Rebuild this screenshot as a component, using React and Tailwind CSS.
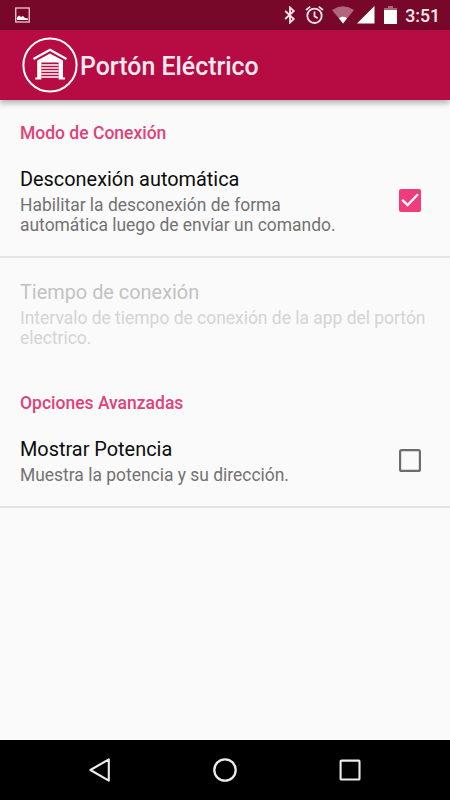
import React, { useState } from "react";

const StatusBar = () => (
  <div className="h-[30px] shrink-0 bg-[#78082a] flex items-center justify-between pl-[15px] pr-[10px]">
    <svg width="15" height="16" viewBox="0 0 15 16">
      <rect x="0.75" y="1" width="13.5" height="14" fill="none" stroke="#f3c9c9" strokeWidth="1.3" />
      <path d="M2 13V10.5l2-2 2 1.5L8 9l2 2 3 .5V13z" fill="#fff" />
    </svg>

    <div className="flex items-center">
      <svg width="12" height="18" viewBox="0 0 12 18" fill="none" stroke="#f6e6ea" strokeWidth="1.8">
        <path d="M1.2 5l8.6 8L6 16.6V1.4L9.8 5l-8.6 8" />
      </svg>
      <svg className="ml-[9px]" width="19" height="20" viewBox="0 0 19 20" fill="none" stroke="#f6e6ea" strokeWidth="1.8">
        <circle cx="9.5" cy="10.8" r="7.2" />
        <path d="M9.5 6.6v4.6l3.2 2M1 5l4.2-3.4M18 5l-4.2-3.4" />
      </svg>
      <svg className="ml-[8px]" width="22" height="18" viewBox="0 0 22 18">
        <path d="M11 17.5L0 4Q11-3.4 22 4z" fill="#b0667d" />
        <path d="M11 17.5L7 12.2Q11 9.4 15 12.2z" fill="#fff" />
      </svg>
      <svg className="ml-[3px]" width="18" height="18" viewBox="0 0 18 18">
        <path d="M0 17.5L17.5 0v17.5z" fill="#fff" />
      </svg>
      <svg className="ml-[9px]" width="13" height="18" viewBox="0 0 13 18">
        <path d="M4 0h5v2h4v2H0V2h4z" fill="#a9627a" />
        <path d="M0 4h13V18H0z" fill="#fff" />
      </svg>
      <span className="ml-[8px] pt-px text-[17.7px] leading-[30px] font-medium text-[#faecef]">3:51</span>
    </div>
  </div>
);

const GarageLogo = () => (
  <svg width="56" height="56" viewBox="0 0 56 56" fill="none" stroke="#fff">
    <circle cx="28" cy="28" r="26.6" strokeWidth="2" />
    <path d="M11.5 22L28 12.8 44.5 22" strokeWidth="2.4" />
    <path d="M28 16.4L15.2 23.4V40.5h-2v2h6.2V25.5h17.2V42.5H43v-2h-2V23.4z" fill="#fff" stroke="none" />
    <path d="M19.4 28h17.2M19.4 31h17.2M19.4 34h17.2M19.4 37h17.2M19.4 40h17.2" strokeWidth="1.5" />
  </svg>
);

const Toolbar = () => (
  <div className="h-[70px] shrink-0 bg-[#b60b43] flex items-center pl-[22px] shadow-[0_3px_6px_rgba(0,0,0,0.3)]">
    <GarageLogo />
    <h1 className="ml-[2px] mt-[4px] text-[24.9px] leading-none font-medium text-[#fdeaf0] whitespace-nowrap">
      Portón Eléctrico
    </h1>
  </div>
);

const Category = ({ children }) => (
  <h2 className="h-[45px] px-5 pt-[23px] text-[17.5px] leading-[21px] font-medium text-[#e0417b]">{children}</h2>
);

const Checkbox = ({ checked, onChange }) => (
  <button
    type="button"
    role="checkbox"
    aria-checked={checked}
    onClick={onChange}
    className="shrink-0 mr-[9px] mb-[2px]"
  >
    <svg className="block" width="22" height="23" viewBox="0 0 22 23" fill="none">
      {checked ? (
        <>
          <rect width="22" height="23" rx="2" fill="#f03c7d" />
          <path d="M3.2 10.8l5.4 5.2L19 5.2" stroke="#fff" strokeWidth="2.3" />
        </>
      ) : (
        <rect x="1.1" y="1.1" width="19.8" height="20.8" rx="1.5" stroke="#6c6c6c" strokeWidth="2.2" />
      )}
    </svg>
  </button>
);

const Preference = ({ title, summary, disabled, children }) => (
  <div className="flex items-center justify-between px-5 pt-[22px] pb-[21px]">
    <div>
      <p
        className={
          disabled
            ? "text-[19.9px] leading-[25px] text-[#c2c2c2]"
            : "text-[19.9px] leading-[25px] text-[#0c0c0c]"
        }
      >
        {title}
      </p>
      <p
        className={
          disabled
            ? "mt-[3px] text-[17.45px] leading-[20px] whitespace-pre-line text-[#d4d4d4]"
            : "mt-[3px] text-[17.45px] leading-[20px] whitespace-pre-line text-[#727272]"
        }
      >
        {summary}
      </p>
    </div>
    {children}
  </div>
);

const NavigationBar = () => (
  <div className="h-[60px] shrink-0 bg-black flex items-center justify-around px-[37px]">
    <svg width="26" height="26" viewBox="0 0 26 26" fill="none" stroke="#ececec" strokeWidth="2.1" strokeLinejoin="round">
      <path d="M21.8 2.4v21.2L3.4 13z" />
    </svg>
    <svg width="26" height="26" viewBox="0 0 26 26" fill="none" stroke="#ececec" strokeWidth="2.3">
      <circle cx="13" cy="13" r="10.7" />
    </svg>
    <svg width="26" height="26" viewBox="0 0 26 26" fill="none" stroke="#ececec" strokeWidth="2.1">
      <rect x="3.6" y="3.6" width="18.9" height="18.9" rx="0.8" />
    </svg>
  </div>
);

const App = () => {
  const [autoDisconnect, setAutoDisconnect] = useState(true);
  const [showPower, setShowPower] = useState(false);

  return (
    <div className="w-[450px] h-[800px] overflow-hidden flex flex-col bg-[#fafafa] font-[Roboto,sans-serif]">
      <StatusBar />
      <Toolbar />
      <main className="flex-1">
        <Category>Modo de Conexión</Category>
        <div className="h-[113px] border-b-2 border-[#e4e4e4]">
          <Preference
            title="Desconexión automática"
            summary={"Habilitar la desconexión de forma\nautomática luego de enviar un comando."}
          >
            <Checkbox checked={autoDisconnect} onChange={() => setAutoDisconnect(!autoDisconnect)} />
          </Preference>
        </div>
        <div className="h-[112px]">
          <Preference
            title="Tiempo de conexión"
            summary={"Intervalo de tiempo de conexión de la app del portón\nelectrico."}
            disabled
          />
        </div>
        <Category>Opciones Avanzadas</Category>
        <div className="h-[93px] border-b-2 border-[#e4e4e4]">
          <Preference title="Mostrar Potencia" summary="Muestra la potencia y su dirección.">
            <Checkbox checked={showPower} onChange={() => setShowPower(!showPower)} />
          </Preference>
        </div>
      </main>
      <NavigationBar />
    </div>
  );
};

export default App;
